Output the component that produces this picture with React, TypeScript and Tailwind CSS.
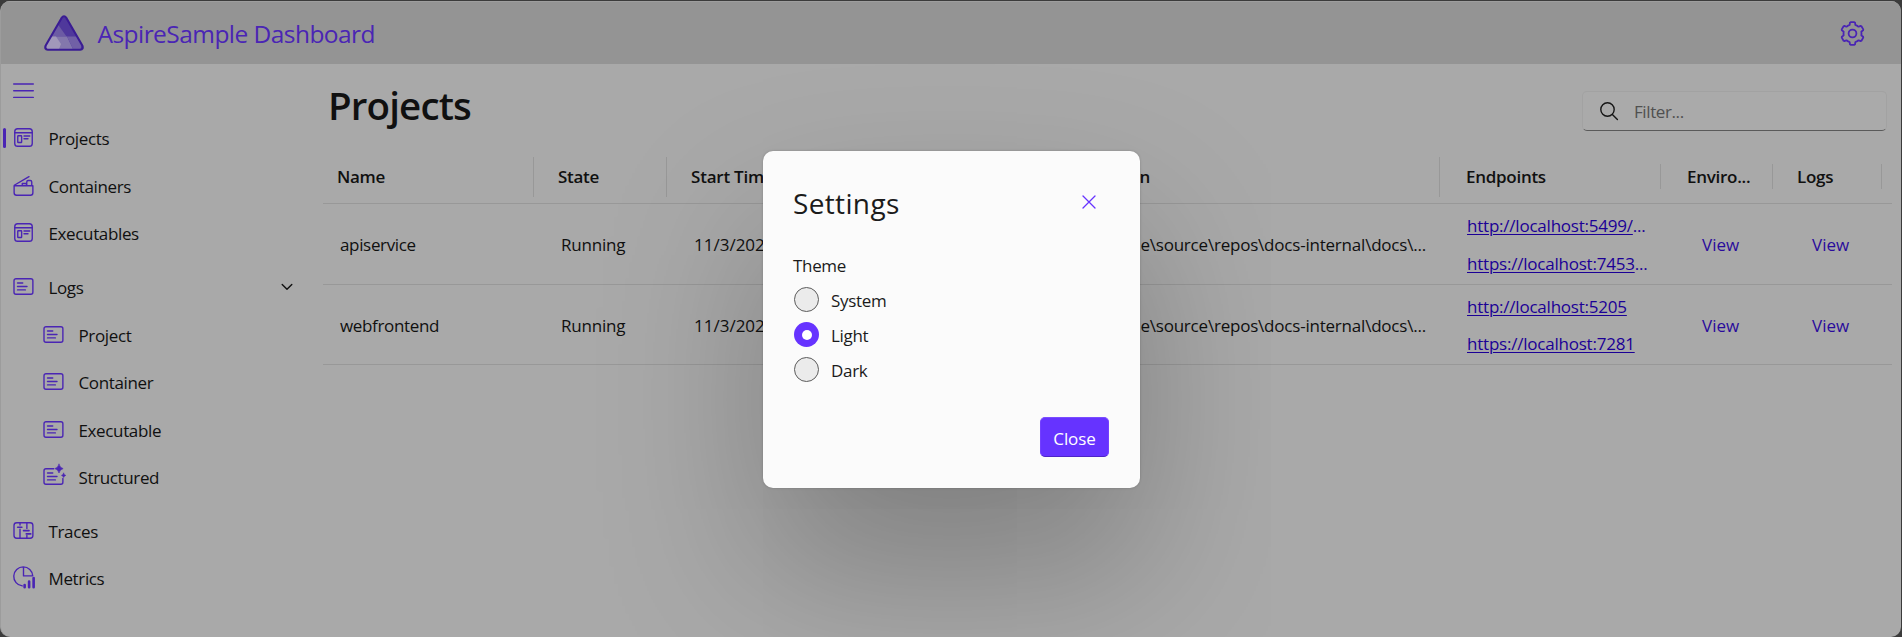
import type { ReactNode } from 'react';

const stroke = { fill: 'none', stroke: 'currentColor', strokeWidth: 1.1, strokeLinecap: 'round', strokeLinejoin: 'round' } as const;

function Icon({ children }: { children: ReactNode }) {
  return (
    <svg viewBox="0 0 20 20" className="size-[25px] shrink-0 overflow-visible text-[#4a25b4]" {...stroke}>
      {children}
    </svg>
  );
}

const AppIcon = () => (
  <Icon>
    <rect x="3" y="3" width="14" height="14" rx="2.3" />
    <path d="M3 6.2h14M10.4 8.8h4.6M10.4 11h3.2" />
    <rect x="5.4" y="8.6" width="3.1" height="5.4" rx=".4" />
  </Icon>
);

const ContainerIcon = () => (
  <Icon>
    <path d="M2.5 10.2h15v5.6a2 2 0 0 1-2 2h-11a2 2 0 0 1-2-2zM2.6 9.8 14.4 2.9M9 10V8.4h3.4V10M12.6 10V7.2q0-1.2 1.2-1.2h1.6q1.2 0 1.2 1.2V10" />
  </Icon>
);

const lines = 'M5.2 7.2h4.2M5.2 10h7.6M5.2 12.7h6.3';

const LogIcon = () => (
  <Icon>
    <rect x="2.4" y="3.8" width="15.1" height="12.4" rx="1.6" />
    <path d={lines} />
  </Icon>
);

const StructuredIcon = () => (
  <Icon>
    <path d="M10.2 3.8H4a1.6 1.6 0 0 0-1.6 1.6v9.2A1.6 1.6 0 0 0 4 16.2h11.9a1.6 1.6 0 0 0 1.6-1.6v-3" />
    <path d={lines} />
    <path
      fill="currentColor"
      strokeWidth=".5"
      d="M14.4.2q.6 2.8 3.3 3.5-2.7.7-3.3 3.5-.6-2.8-3.3-3.5 2.7-.7 3.3-3.5zM18.1 7.4q.3 1.4 1.7 1.7-1.4.3-1.7 1.7-.3-1.4-1.7-1.7 1.4-.3 1.7-1.7z"
    />
  </Icon>
);

const TraceIcon = () => (
  <Icon>
    <rect x="2.4" y="3.8" width="15.1" height="12.4" rx="2.2" />
    <path d="M7.2 4v1.6M7.2 9v7M12.7 4v4.3M12.7 14v2" />
    <path strokeWidth="1.3" d="M5.3 7.4h3.4M10 10.1h4.4M12.2 12.7h3.6" />
  </Icon>
);

const MetricIcon = () => (
  <Icon>
    <path d="M9 17.5A7.6 7.6 0 1 1 17.4 9.5H10V2.5" />
    <path strokeWidth="2.1" d="M10.9 16.8v1.7M14.5 14v4.5M18.1 11.2v7.3" />
  </Icon>
);

const gearPath =
  Array.from({ length: 6 }, (_, i) =>
    ([[-25, 9], [-19, 9], [-15.5, 10], [-13.5, 11.1], [-9, 11.5], [9, 11.5], [13.5, 11.1], [15.5, 10], [19, 9], [25, 9]] as const)
      .map(([a, r]) => {
        const t = ((i * 60 + a - 90) * Math.PI) / 180;
        return `${(Math.cos(t) * r).toFixed(2)} ${(Math.sin(t) * r).toFixed(2)}`;
      })
      .join(' L'),
  )
    .map((p, i) => (i ? 'L' : 'M') + p)
    .join(' ') + 'Z';

const Gear = () => (
  <svg viewBox="-12.5 -12.5 25 25" className="size-[25px] text-[#4a25b4]" {...stroke} strokeWidth={1.8}>
    <path d={gearPath} />
    <circle r="3.9" />
  </svg>
);

const outline = 'M17.6 2.9q2.4-3.2 4.8 0L38.3 30.5q1.5 3.9-2.1 4.2H3.8q-3.6-.3-2.1-4.2z';

const Logo = () => (
  <svg viewBox="0 0 40 36" className="h-9 w-10 shrink-0">
    <path fill="#4f389b" d={outline} />
    <path fill="#6c5ba4" d="M14 9.5 7 21.5h15.5z" />
    <path fill="#8377ac" d="M6.5 21.5H23L29 34H8z" />
    <path fill="#a198ba" d="M6.5 21.5H12l5 7.5-2 5H3L1.5 31z" />
    <path fill="#7160a6" d="M23 21.5h10.5L38 30l-1.5 4H29z" />
    <path fill="none" stroke="#3a1c93" strokeWidth="2.1" strokeLinejoin="round" d={outline} />
  </svg>
);

type NavEntry = { label: string; icon: ReactNode; active?: boolean; expanded?: boolean };

function NavItem({ label, icon, active, expanded }: NavEntry) {
  return (
    <div className="flex h-[41.25px] w-[312px] items-center">
      <span className={active ? 'ml-[2px] h-5 w-[3px] rounded-sm bg-[#4a25b4]' : 'ml-[2px] h-5 w-[3px]'} />
      <span className="ml-[4.6px]">{icon}</span>
      <span className="ml-[12.9px] flex-1 pt-[3px] tracking-[-0.36px]">{label}</span>
      {expanded && (
        <svg viewBox="0 0 12 8" className="mr-[20.5px] h-2 w-3 text-[#111]" {...stroke} strokeWidth={1.4}>
          <path d="M1.2 1.5 6 6.3l4.8-4.8" />
        </svg>
      )}
    </div>
  );
}

const resources: NavEntry[] = [
  { label: 'Projects', icon: <AppIcon />, active: true },
  { label: 'Containers', icon: <ContainerIcon /> },
  { label: 'Executables', icon: <AppIcon /> },
];
const logs: NavEntry[] = [
  { label: 'Project', icon: <LogIcon /> },
  { label: 'Container', icon: <LogIcon /> },
  { label: 'Executable', icon: <LogIcon /> },
  { label: 'Structured', icon: <StructuredIcon /> },
];
const telemetry: NavEntry[] = [
  { label: 'Traces', icon: <TraceIcon /> },
  { label: 'Metrics', icon: <MetricIcon /> },
];

const columns = 'grid grid-cols-[211px_133px_773px_221px_112px_109px_11px]';

const headers = [
  { label: 'Name', pad: 'pl-[14px]', rule: 'h-10' },
  { label: 'State', pad: 'pl-6', rule: 'h-10' },
  { label: 'Start Time', pad: 'pl-6', rule: 'h-10' },
  { label: 'Endpoints', pad: 'pl-[26px]', rule: 'h-[25px]' },
  { label: 'Enviro...', pad: 'pl-[26px]', rule: 'h-[25px]' },
  { label: 'Logs', pad: 'pl-6', rule: 'h-[25px]' },
];

const rows = [
  { name: 'apiservice', height: 'h-[81px]', links: [['http://localhost:5499/', '...'], ['https://localhost:7453', '...']] },
  { name: 'webfrontend', height: 'h-20', links: [['http://localhost:5205', ''], ['https://localhost:7281', '']] },
];

function ProjectsTable() {
  return (
    <div className="mt-[17px] w-[1569px]">
      <div className={`${columns} h-[58px] border-b border-[#989898] font-semibold tracking-[-0.28px]`}>
        {headers.map((h) => (
          <div key={h.label} className={`flex h-[61px] items-center justify-between ${h.pad}`}>
            {h.label === 'Start Time' ? (
              <span className="flex w-[459px] justify-between">
                <span className="tracking-[-0.22px]">Start Time</span>
                <span>Source Location</span>
              </span>
            ) : (
              <span>{h.label}</span>
            )}
            <span className={`${h.rule} w-px bg-[#989898]`} />
          </div>
        ))}
      </div>
      {rows.map((r) => (
        <div key={r.name} className={`${columns} ${r.height} items-center border-b border-[#989898]`}>
          <span className="pl-[17px] pt-[2px] tracking-[-0.34px]">{r.name}</span>
          <span className="pl-[27px] pt-[2px] tracking-[-0.22px]">Running</span>
          <span className="flex justify-between pl-[27px] pr-[14px] pt-[2px]">
            <span>11/3/2023</span>
            <span className="tracking-[-0.21px]">C:\Users\me\source\repos\docs-internal\docs\...</span>
          </span>
          <span className="flex flex-col gap-[13.5px] pl-[27px] pt-[2px] leading-6 tracking-[-0.22px] text-[#1b0096]">
            {r.links.map(([url, tail]) => (
              <span key={url}>
                <span className="underline decoration-1 underline-offset-2">{url}</span>
                {tail}
              </span>
            ))}
          </span>
          <span className="pl-[41px] pt-[2px] text-[#2a0b9c]">View</span>
          <span className="pl-[39px] pt-[2px] text-[#2a0b9c]">View</span>
        </div>
      ))}
    </div>
  );
}

function Radio({ label, checked }: { label: string; checked?: boolean }) {
  return (
    <div className="flex h-[35px] items-center gap-3">
      {checked ? (
        <span className="flex size-[25px] items-center justify-center rounded-full bg-[#6633ff]">
          <span className="size-[10px] rounded-full bg-white" />
        </span>
      ) : (
        <span className="size-[25px] rounded-full border border-[#5c5c5c] bg-[#ebebeb]" />
      )}
      <span className="pt-[2px] tracking-[-0.3px]">{label}</span>
    </div>
  );
}

function SettingsDialog() {
  return (
    <div className="absolute left-[763px] top-[151px] flex h-[337px] w-[377px] flex-col rounded-[10px] bg-[#fbfbfb] p-[31px] text-[#1b1b1b] shadow-[0_0_2.5px_rgba(0,0,0,.2),0_80px_160px_rgba(0,0,0,.25)]">
      <div className="flex h-[42px] items-center justify-between">
        <h2 className="-ml-px text-[28px] tracking-[0.35px]">Settings</h2>
        <svg viewBox="0 0 14 14" className="mb-[2px] mr-[13px] size-[14px] text-[#6633ff]" {...stroke} strokeWidth={1.3}>
          <path d="m1 1 12 12M13 1 1 13" />
        </svg>
      </div>
      <div className="-ml-px mt-[30px] h-7 leading-6 tracking-[-0.32px]">Theme</div>
      <Radio label="System" />
      <Radio label="Light" checked />
      <Radio label="Dark" />
      <button className="mt-auto h-10 w-[69px] self-end rounded-[5px] border border-b-[#4d24c8] border-l-[#7340ff] border-r-[#7340ff] border-t-[#7a4dff] bg-[#6633ff] pt-[3px] tracking-[-0.1px] text-white">
        Close
      </button>
    </div>
  );
}

export default function App() {
  return (
    <div className="relative h-[637px] w-[1902px] overflow-hidden bg-[#3b3b3b] pt-px font-['Open_Sans',sans-serif] text-[17px] text-[#101010]">
      <div className="flex h-[636px] w-[1901px] flex-col overflow-hidden rounded-[10px] border-l border-[#9c9c9c] bg-[#a9a9a9]">
        <header className="flex h-[63px] shrink-0 items-center justify-between border-t border-[#9e9e9e] bg-[#949494] pl-[43px] pr-[36.5px]">
          <div className="flex items-center gap-[13.5px]">
            <Logo />
            <span className="pt-[3px] text-[24.5px] tracking-[-0.55px] text-[#4a25b4]">AspireSample Dashboard</span>
          </div>
          <Gear />
        </header>
        <div className="flex flex-1">
          <nav className="flex w-[322px] flex-col gap-[6.25px] pt-[15px]">
            <div className="flex h-[31.75px] pl-3">
              <svg viewBox="0 0 21 18" className="mt-[3px] h-[18px] w-[21px] text-[#4a25b4]" {...stroke} strokeWidth={1.4}>
                <path d="M.7 2h19.6M.7 8.7h19.6M.7 15.4h19.6" />
              </svg>
            </div>
            {resources.map((e) => (
              <NavItem key={e.label} {...e} />
            ))}
            <div className="mt-[6.5px] flex flex-col gap-[6.25px]">
              <NavItem label="Logs" icon={<LogIcon />} expanded />
              <div className="flex w-[282px] flex-col gap-[6.25px] pl-[30px]">
                {logs.map((e) => (
                  <NavItem key={e.label} {...e} />
                ))}
              </div>
            </div>
            <div className="mt-[6.5px] flex flex-col gap-[5px]">
              {telemetry.map((e) => (
                <NavItem key={e.label} {...e} />
              ))}
            </div>
          </nav>
          <main className="flex-1">
            <div className="flex h-[65px] justify-between pr-[14px] pt-[16px]">
              <h1 className="pl-[5px] text-[38.5px] font-semibold leading-[51px] tracking-[-0.86px]">Projects</h1>
              <div className="mt-[11px] flex h-10 w-[305px] shrink-0 items-center rounded-[5px] border border-b-[#5a5a5a] border-l-[#a2a2a2] border-r-[#a2a2a2] border-t-[#a2a2a2] bg-[#aaaaaa]">
                <svg viewBox="0 0 20 20" className="ml-[16px] size-5 text-[#161616]" {...stroke} strokeWidth={1.4}>
                  <circle cx="8.5" cy="8.5" r="6.7" />
                  <path d="m13.4 13.4 5 5" />
                </svg>
                <span className="ml-[15px] pt-[2px] tracking-[-0.4px] text-[#505050]">Filter...</span>
              </div>
            </div>
            <ProjectsTable />
          </main>
        </div>
      </div>
      <SettingsDialog />
    </div>
  );
}
